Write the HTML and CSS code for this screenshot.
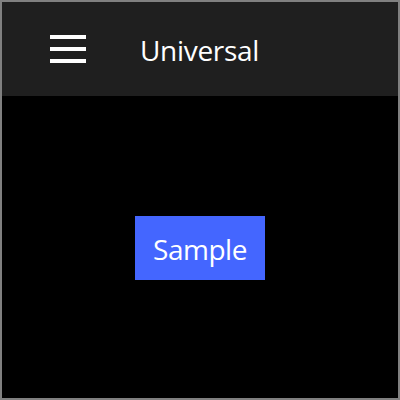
FILE: index.html
```html
<!DOCTYPE html>
<html>
<head>
<meta charset="utf-8">
<link rel="stylesheet" href="styles.css">
</head>
<body>
<div class="frame">
  <header class="bar">
    <div class="menu" aria-label="menu">
      <span></span><span></span><span></span>
    </div>
    <div class="title">Universal</div>
  </header>
  <main class="content">
    <button class="sample">Sample</button>
  </main>
</div>
</body>
</html>
```
FILE: styles.css
```css
html, body {
  margin: 0;
  padding: 0;
  background: #000;
}
.frame {
  box-sizing: border-box;
  width: 400px;
  height: 400px;
  border: 2px solid #808080;
  display: flex;
  flex-direction: column;
  font-family: "Open Sans", "Noto Sans", sans-serif;
}
.bar {
  height: 94px;
  background: #1f1f1f;
  display: flex;
  align-items: center;
  padding-left: 48px;
  flex-shrink: 0;
}
.menu {
  width: 36px;
  display: flex;
  flex-direction: column;
  gap: 8px;
}
.menu span {
  display: block;
  height: 4px;
  background: #fff;
}
.title {
  margin-left: 54px;
  color: #fff;
  font-size: 28px;
  letter-spacing: -0.3px;
  line-height: 1;
  padding-top: 1px;
}
.content {
  flex: 1;
  background: #000;
  display: flex;
  align-items: center;
  justify-content: center;
  padding-top: 2px;
}
.sample {
  width: 130px;
  height: 64px;
  border: none;
  background: #4466ff;
  color: #fff;
  font-family: inherit;
  font-size: 28px;
  letter-spacing: -0.5px;
  padding: 2px 0 0 0;
}
```
